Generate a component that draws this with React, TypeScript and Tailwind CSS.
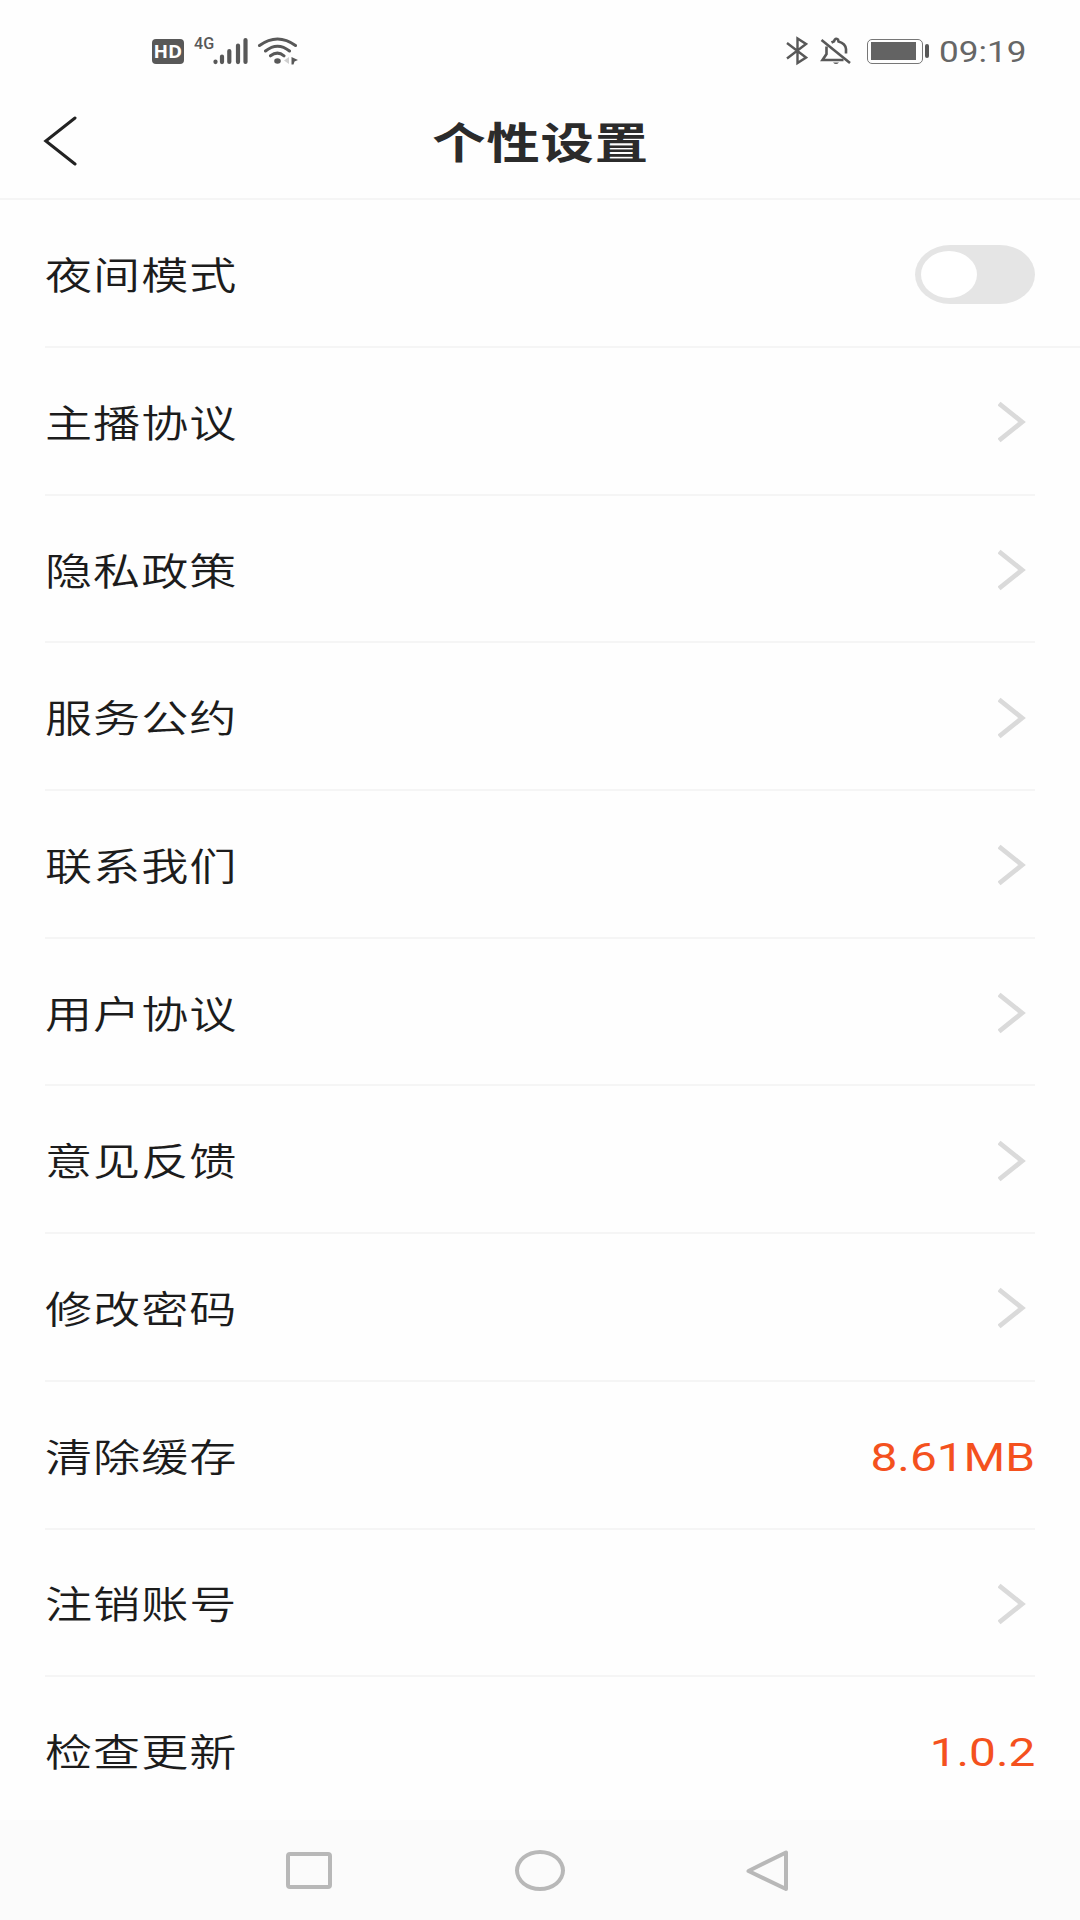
import React from 'react';

type Item = { label: string; value?: string; toggle?: boolean };

const items: Item[] = [
  { label: '夜间模式', toggle: true },
  { label: '主播协议' },
  { label: '隐私政策' },
  { label: '服务公约' },
  { label: '联系我们' },
  { label: '用户协议' },
  { label: '意见反馈' },
  { label: '修改密码' },
  { label: '清除缓存', value: '8.61MB' },
  { label: '注销账号' },
  { label: '检查更新', value: '1.0.2' },
];

function StatusBar() {
  return (
    <div className="flex h-[102px] items-center justify-between pl-[152px] pr-[53px] text-[#585858]">
      <div className="flex items-center">
        <div className="flex h-[25px] w-[32px] items-center justify-center rounded-[4px] bg-[#585858]">
          <span className="scale-x-[1.12] font-['Open_Sans'] text-[17px] font-bold leading-none text-white">HD</span>
        </div>
        <span className="ml-[10px] mt-[-16px] w-[19px] origin-left scale-x-[0.95] font-['Roboto'] text-[17px] font-medium leading-none">4G</span>
        <svg className="h-[28px] w-[36px]" viewBox="0 0 36 28" fill="none" stroke="currentColor" strokeWidth="4.2" strokeLinecap="round">
          <path d="M2.5 24.5v.6M9 19.5v5.6M16.300 14v11M25 8.500v16.600M32.500 3v22" />
        </svg>
        <svg className="ml-[8px] h-[28px] w-[42px]" viewBox="0 0 42 28" fill="none" stroke="currentColor" strokeWidth="3" strokeLinecap="round">
          <path d="M2.500 8.500Q20.500 -4.500 38.500 8.500M8.500 14Q20.500 4.500 32.500 14M13.500 18.800Q20.500 13.500 27 18.800" />
          <ellipse cx="20.500" cy="24" rx="3.300" ry="2.700" fill="currentColor" stroke="none" />
          <path d="M32 20v7l-5-3.500z" fill="#cfcfcf" stroke="none" />
          <path d="M34.500 20l6.500 3-3.500 1.500-1 3h-2z" fill="currentColor" stroke="none" />
        </svg>
      </div>
      <div className="flex items-center">
        <svg className="h-[30px] w-[22px]" viewBox="0 0 22 30" fill="none" stroke="currentColor" strokeWidth="2.400">
          <path d="M1 7L20 21.500L11.500 27V2.500L20 8L1 22.500" />
        </svg>
        <svg className="ml-[12px] h-[30px] w-[32px]" viewBox="0 0 32 30" fill="none" stroke="currentColor" strokeWidth="2.600">
          <path d="M1.500 4L30 27" />
          <path d="M6.500 10.500V18L2.500 24H23.500M11.500 6.500L14 5.300Q15 1.500 18 3.500L18.500 5.500Q25.500 7.500 26 13V17.500" />
          <path d="M13 26.500Q16 29.500 19 26.500z" fill="currentColor" stroke="none" />
        </svg>
        <div className="ml-[15px] flex h-[25px] w-[56px] items-center rounded-[5px] border border-[#777777] px-[3px]">
          <div className="h-[18px] w-[45px] bg-[#636363]" />
        </div>
        <div className="ml-[2px] h-[14px] w-[4px] rounded-[2px] bg-[#585858]" />
        <span className="ml-[10px] mt-[2px] w-[88px] font-['Roboto'] text-[30px] leading-none text-[#666666]">
          <span className="inline-block origin-left scale-x-[1.17]">09:19</span>
        </span>
      </div>
    </div>
  );
}

function Header() {
  return (
    <header className="grid h-[98px] grid-cols-[200px_1fr_200px] items-center border-b-2 border-[#f5f5f5]">
      <svg className="ml-[43px] mb-[18px] h-[50px] w-[36px]" viewBox="0 0 36 50" fill="none" stroke="#222222" strokeWidth="3" strokeLinecap="round">
        <path d="M32 2L2.800 25L32 48" strokeLinejoin="miter" />
      </svg>
      <h1 className="mb-[20px] scale-x-[1.24] pl-[1px] text-center text-[43px] font-bold leading-none tracking-[0.700px] text-[#2b2b2b]">个性设置</h1>
    </header>
  );
}

function Toggle() {
  return (
    <div className="mt-[3px] flex h-[59px] w-[120px] items-center rounded-[36px/30px] bg-[#e5e5e5] pl-[6px]">
      <div className="h-[47px] w-[56px] rounded-[50%] bg-white" />
    </div>
  );
}

function Row({ item }: { item: Item }) {
  return (
    <div
      className={
        item.toggle
          ? 'ml-[45px] flex h-[148px] items-center justify-between border-b-2 border-[#f5f5f5] pr-[45px]'
          : 'mx-[45px] flex h-[147.700px] items-center justify-between border-b-2 border-[#f5f5f5] last:border-transparent'
      }
    >
      <span className="origin-left scale-x-[1.24] text-[38px] font-[350] leading-none tracking-[0.800px] text-[#1c1c1c]">{item.label}</span>
      {item.toggle && <Toggle />}
      {item.value && (
        <span className="mt-[6px] origin-right scale-x-[1.21] font-['Roboto'] text-[39.500px] font-[370] leading-none text-[#f4511e]">{item.value}</span>
      )}
      {!item.toggle && !item.value && (
        <svg className="mr-[9px] mt-[3px] h-[42px] w-[28px]" viewBox="0 0 28 42" fill="none" stroke="#dadada" strokeWidth="4.800">
          <path d="M1 2.500L24 21L1 39.500" />
        </svg>
      )}
    </div>
  );
}

export default function App() {
  return (
    <div className="flex h-[1920px] w-[1080px] flex-col overflow-hidden bg-[#fefefe] font-['Noto_Sans_CJK_SC',sans-serif]">
      <StatusBar />
      <Header />
      <main className="h-[1620px] overflow-hidden">
        {items.map((item) => (
          <Row key={item.label} item={item} />
        ))}
      </main>
      <nav className="flex h-[100px] items-center bg-[#fbfbfb] pl-[286px] pt-[1px]">
        <div className="h-[37px] w-[46px] rounded-[4px] border-[4px] border-[#b8b8b8]" />
        <div className="ml-[183px] h-[41px] w-[50px] rounded-[50%] border-[4px] border-[#b8b8b8]" />
        <svg className="ml-[180px] h-[42px] w-[44px]" viewBox="0 0 44 42" fill="none" stroke="#b8b8b8" strokeWidth="4" strokeLinejoin="round">
          <path d="M3.500 21L41 2.500V39z" />
        </svg>
      </nav>
    </div>
  );
}
